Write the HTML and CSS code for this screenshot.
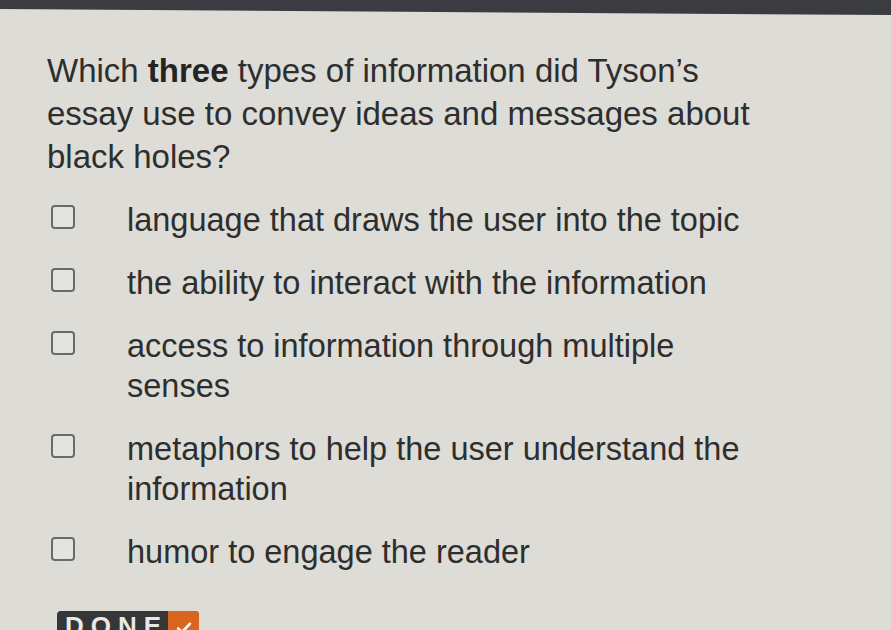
FILE: index.html
```html
<!DOCTYPE html>
<html lang="en">
<head>
<meta charset="utf-8">
<title>Question</title>
<link rel="stylesheet" href="styles.css">
</head>
<body>
<div class="topbar"></div>
<main class="page">
  <p class="question">Which <strong>three</strong> types of information did Tyson’s essay use to convey ideas and messages about black holes?</p>
  <ul class="options">
    <li class="option"><span class="box"></span><span class="label">language that draws the user into the topic</span></li>
    <li class="option"><span class="box"></span><span class="label">the ability to interact with the information</span></li>
    <li class="option"><span class="box"></span><span class="label">access to information through multiple senses</span></li>
    <li class="option"><span class="box"></span><span class="label">metaphors to help the user understand the information</span></li>
    <li class="option"><span class="box"></span><span class="label">humor to engage the reader</span></li>
  </ul>
  <button class="done"><span class="done-text">DONE</span><span class="done-check"><svg viewBox="0 0 24 24" width="20" height="20"><path d="M5 12.5l4.5 4.5L19 7" fill="none" stroke="#fff" stroke-width="3.2" stroke-linecap="round" stroke-linejoin="round"/></svg></span></button>
</main>
</body>
</html>
```
FILE: styles.css
```css
html, body {
  margin: 0;
  padding: 0;
  background: #dddcd6;
  overflow: hidden;
}
body {
  width: 891px;
  height: 630px;
  font-family: "Liberation Sans", Arial, sans-serif;
  color: #2e2e2e;
}
.topbar {
  height: 15px;
  background: #3a3c41;
  clip-path: polygon(0 0, 100% 0, 100% 100%, 0 60%);
}
.page {
  padding-left: 47px;
}
.question {
  margin: 34px 0 0 0;
  width: 730px;
  font-size: 33px;
  line-height: 43px;
}
.question strong {
  font-weight: bold;
  color: #242424;
}
.options {
  list-style: none;
  margin: 22px 0 0 0;
  padding: 0;
  display: flex;
  flex-direction: column;
  gap: 23px;
}
.option {
  display: flex;
  align-items: flex-start;
  font-size: 32.5px;
  line-height: 40px;
}
.box {
  flex: none;
  width: 20px;
  height: 20px;
  margin: 5px 0 0 4px;
  border: 2px solid #6a6a6a;
  border-radius: 4px;
  background: #e4e3de;
}
.label {
  margin-left: 52px;
  width: 630px;
}
.done {
  margin: 39px 0 0 10px;
  display: flex;
  padding: 0;
  border: none;
  border-radius: 4px;
  overflow: hidden;
  height: 34px;
  background: #353638;
  font-family: "Liberation Sans", Arial, sans-serif;
}
.done-text {
  width: 111px;
  color: #e8e8e8;
  font-weight: bold;
  font-size: 26px;
  letter-spacing: 7px;
  line-height: 30px;
  text-indent: 8px;
  text-align: left;
}
.done-check {
  width: 31px;
  background: #d9661f;
  display: flex;
  align-items: center;
  justify-content: center;
}
```
